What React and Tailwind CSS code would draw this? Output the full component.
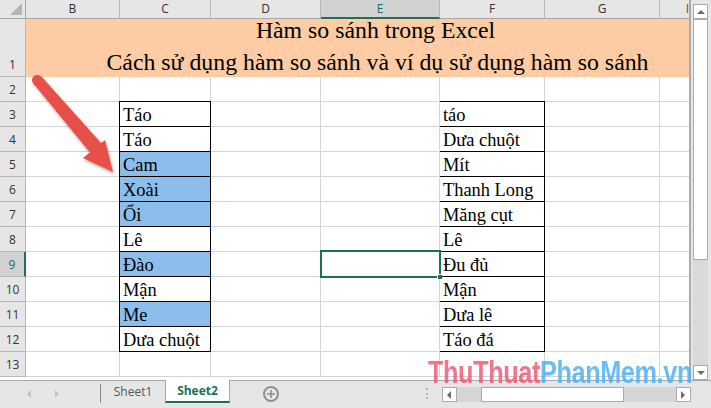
import React from 'react';

const rowLabels = [2, 3, 4, 5, 6, 7, 8, 9, 10, 11, 12, 13];
const leftList = ['', 'Táo', 'Táo', 'Cam', 'Xoài', 'Ổi', 'Lê', 'Đào', 'Mận', 'Me', 'Dưa chuột', ''];
const rightList = ['', 'táo', 'Dưa chuột', 'Mít', 'Thanh Long', 'Măng cụt', 'Lê', 'Đu đủ', 'Mận', 'Dưa lê', 'Táo đá', ''];
const blue = ['Cam', 'Xoài', 'Ổi', 'Đào', 'Me'];

const ColHead = ({ w, label, active }) => (
  <div
    className={`flex items-center justify-center shrink-0 h-[19px] border-r border-[#b8b8b8] text-[12px] ${
      active ? 'bg-[#d2d2d2] text-[#1f6f56] border-b-2 border-b-[#1f6f56]' : 'border-b border-b-[#a8a8a8] text-[#333]'
    } ${w}`}
  >
    {label}
  </div>
);

const Cell = ({ w, children, className = '' }) => (
  <div className={`shrink-0 h-[25px] border-r border-b border-[#d4d4d4] ${w} ${className}`}>{children}</div>
);

const DataCell = ({ w, text, first, tint }) => (
  <div
    className={`shrink-0 -ml-px h-[25px] border-x border-b border-black pl-[3px] pt-px text-[18.4px] leading-[24px] text-black whitespace-nowrap overflow-hidden ${w} ${
      tint ? 'bg-[#8dbdea]' : 'bg-white'
    } ${first ? 'border-t -mt-px h-[26px]' : ''}`}
    style={{ fontFamily: '"Liberation Serif", serif' }}
  >
    {text}
  </div>
);

const Row = ({ n, i }) => {
  const selected = n === 9;
  return (
    <div className="flex">
      <div
        className={`shrink-0 w-[26px] h-[25px] pt-px flex items-center justify-center border-r border-b border-[#b8b8b8] text-[12px] ${
          selected ? 'bg-[#d2d2d2] text-[#1f6f56] border-r-2 border-r-[#1f6f56]' : 'bg-[#e6e6e6] text-[#333]'
        }`}
      >
        {n}
      </div>
      <Cell w="w-[94px]" />
      {leftList[i] ? (
        <DataCell w="w-[92px]" text={leftList[i]} first={n === 3} tint={blue.includes(leftList[i])} />
      ) : (
        <Cell w="w-[91px]" />
      )}
      <Cell w="w-[110px]" />
      <Cell w="w-[119px]" className="relative">
        {selected && (
          <div className="absolute z-10 -left-px -top-[2px] w-[121px] h-[28px] border-2 border-[#1f6f56]">
            <div className="absolute -right-[3px] -bottom-[3px] w-[5px] h-[5px] bg-[#1f6f56] border-l border-t border-white" />
          </div>
        )}
      </Cell>
      {rightList[i] ? (
        <DataCell w="w-[106px]" text={rightList[i]} first={n === 3} />
      ) : (
        <Cell w="w-[105px]" />
      )}
      <Cell w="w-[115px]" />
      <Cell w="w-[29px]" className="border-r-0" />
    </div>
  );
};

const ScrollBtn = ({ dir }) => {
  const pts = { up: '1,6 5,2 9,6', down: '1,2 5,6 9,2', left: '6,0 2,4 6,8', right: '2,0 6,4 2,8' };
  return (
    <div className="shrink-0 w-[15px] h-[15px] bg-white border border-[#ababab] flex items-center justify-center">
      <svg width="10" height="8" viewBox="0 0 10 8"><polygon points={pts[dir]} fill="#6a6a6a" /></svg>
    </div>
  );
};

export default function App() {
  return (
    <div
      className="relative w-[711px] h-[408px] overflow-hidden bg-[#e6e6e6] text-[#333]"
      style={{ fontFamily: '"Open Sans", sans-serif' }}
    >
      <div className="flex h-[380px]">
        {/* sheet */}
        <div className="w-[691px] shrink-0 bg-white overflow-hidden border-r-2 border-[#ababab]">
          <div className="flex bg-[#e6e6e6]">
            <div className="w-[26px] h-[19px] shrink-0 border-r border-b border-[#a8a8a8] flex items-end justify-end pr-[3px] pb-[3px]">
              <svg width="12" height="12" viewBox="0 0 12 12"><polygon points="12,0 12,12 0,12" fill="#b5b5b5" /></svg>
            </div>
            <ColHead w="w-[94px]" label="B" />
            <ColHead w="w-[91px]" label="C" />
            <ColHead w="w-[110px]" label="D" />
            <ColHead w="w-[119px]" label="E" active />
            <ColHead w="w-[105px]" label="F" />
            <ColHead w="w-[115px]" label="G" />
            <div className="w-[29px] h-[19px] shrink-0 border-b border-[#a8a8a8] flex items-center justify-end text-[12px] text-[#8a3a3a]">I</div>
          </div>
          <div className="flex h-[58px]">
            <div className="w-[26px] shrink-0 bg-[#e6e6e6] border-r border-b border-[#b8b8b8] flex items-end justify-center pb-[2px] text-[12px]">1</div>
            <div
              className="w-[663px] shrink-0 bg-[#fdcba4] text-black text-[23.8px] leading-[32px] text-center pl-[36px] whitespace-nowrap"
              style={{ fontFamily: '"Liberation Serif", serif' }}
            >
              <div className="-mt-[5px]">Hàm so sánh trong Excel</div>
              <div className="pl-[4px]">Cách sử dụng hàm so sánh và ví dụ sử dụng hàm so sánh</div>
            </div>
          </div>
          {rowLabels.map((n, i) => <Row key={n} n={n} i={i} />)}
        </div>
        {/* vertical scrollbar */}
        <div className="flex-1 flex flex-col items-start pl-[2px] bg-[#e6e6e6] pt-[4px]">
          <ScrollBtn dir="up" />
          <div className="flex-1 w-[15px] bg-[#d9d9d9] flex flex-col">
            <div className="h-[241px] bg-white border border-[#ababab]" />
          </div>
          <ScrollBtn dir="down" />
        </div>
      </div>

      {/* bottom tab bar */}
      <div className="flex items-start h-[28px] border-t border-[#a8a8a8] bg-[#e6e6e6] text-[12px]">
        <div className="w-[101px] h-[19px] mt-[3px] shrink-0 border-r border-[#8a8a8a] flex items-center pl-[26px] gap-[22px]">
          <svg width="6" height="8" viewBox="0 0 6 8"><polygon points="5,0 1,4 5,8" fill="#c4c4c4" /></svg>
          <svg width="6" height="8" viewBox="0 0 6 8"><polygon points="1,0 5,4 1,8" fill="#c4c4c4" /></svg>
        </div>
        <div className="w-[64px] h-[22px] shrink-0 flex items-center justify-center text-[#555]">Sheet1</div>
        <div className="w-[65px] h-[23px] -mt-px shrink-0 flex items-center justify-center bg-white border-x border-[#a8a8a8] border-b-2 border-b-[#1f6f56] font-bold text-[#1f6f56]">Sheet2</div>
        <div className="ml-[33px] mt-[5px] w-[16px] h-[16px] rounded-full border-2 border-[#8f8f8f] flex items-center justify-center shrink-0">
          <svg width="8" height="8" viewBox="0 0 8 8"><path d="M4 0v8M0 4h8" stroke="#8f8f8f" strokeWidth="1.6" /></svg>
        </div>
        <div className="ml-[147px] mt-[7px] w-[2px] h-[11px] flex flex-col justify-between shrink-0">
          <div className="w-[2px] h-[2px] bg-[#b5b5b5]" /><div className="w-[2px] h-[2px] bg-[#b5b5b5]" /><div className="w-[2px] h-[2px] bg-[#b5b5b5]" />
        </div>
        <div className="ml-[14px] mt-[6px] flex w-[249px] shrink-0 bg-[#d6d6d6]">
          <ScrollBtn dir="left" />
          <div className="flex-1 pl-[24px]"><div className="w-[143px] h-[15px] bg-white border border-[#ababab]" /></div>
          <ScrollBtn dir="right" />
        </div>
      </div>

      {/* annotation arrow */}
      <svg className="absolute left-0 top-0 z-20 pointer-events-none" width="130" height="190" viewBox="0 0 130 190">
        <defs>
          <filter id="arrowShadow" x="-20%" y="-20%" width="150%" height="150%">
            <feDropShadow dx="1" dy="2" stdDeviation="1.5" floodColor="#000" floodOpacity="0.35" />
          </filter>
        </defs>
        <g filter="url(#arrowShadow)" fill="#e8504a">
          <circle cx="37" cy="80" r="5" />
          <polygon points="33,83 41,76 102,144 92,155" />
          <polygon points="83,158 105,140 113,172" />
        </g>
      </svg>

      {/* watermark */}
      <div
        className="absolute z-20 left-[428px] top-[352px] text-[32px] leading-[40px] font-bold whitespace-nowrap tracking-[-0.5px] origin-left scale-x-[0.79]"
        style={{ fontFamily: '"Liberation Sans", sans-serif' }}
      >
        <span className="text-[#ee5a78]/85">ThuThuat</span>
        <span className="text-[#4fb2ee]/85">PhanMem.vn</span>
      </div>
    </div>
  );
}
